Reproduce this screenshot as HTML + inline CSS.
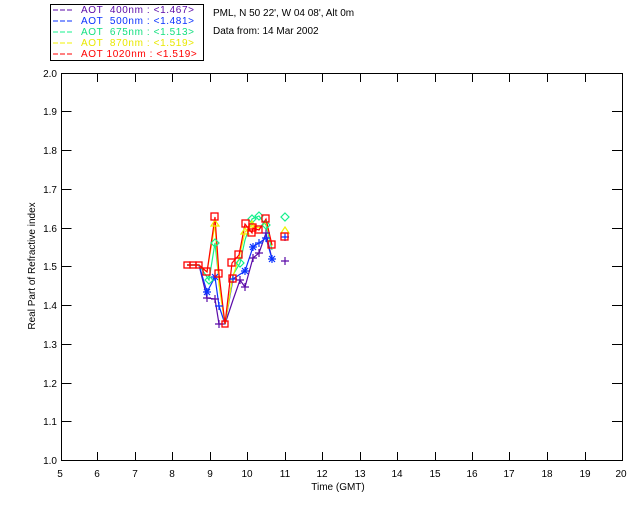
<!DOCTYPE html>
<html><head><meta charset="utf-8"><style>
html,body{margin:0;padding:0;background:#fff;}
svg{display:block;font-family:"Liberation Sans",sans-serif;}
</style></head><body>
<svg width="640" height="512" viewBox="0 0 640 512" xmlns="http://www.w3.org/2000/svg">
<rect width="640" height="512" fill="#fff"/>
<!-- legend -->
<rect x="50.5" y="4.5" width="153" height="56" fill="none" stroke="#000" stroke-width="1"/>
<g font-size="10" letter-spacing="0.6">
<line x1="53" y1="10" x2="73" y2="10" stroke="#5a0aa8" stroke-dasharray="5,2"/>
<text x="81" y="13" fill="#5a0aa8" xml:space="preserve">AOT  400nm : &lt;1.467&gt;</text>
<line x1="53" y1="21" x2="73" y2="21" stroke="#0a32ff" stroke-dasharray="5,2"/>
<text x="81" y="24" fill="#0a32ff" xml:space="preserve">AOT  500nm : &lt;1.481&gt;</text>
<line x1="53" y1="32" x2="73" y2="32" stroke="#14f08c" stroke-dasharray="5,2"/>
<text x="81" y="35" fill="#14e080" xml:space="preserve">AOT  675nm : &lt;1.513&gt;</text>
<line x1="53" y1="43" x2="73" y2="43" stroke="#f0f000" stroke-dasharray="5,2"/>
<text x="81" y="46" fill="#e8e800" xml:space="preserve">AOT  870nm : &lt;1.519&gt;</text>
<line x1="53" y1="54" x2="73" y2="54" stroke="#f00" stroke-dasharray="5,2"/>
<text x="81" y="57" fill="#f00" xml:space="preserve">AOT 1020nm : &lt;1.519&gt;</text>
</g>
<g font-size="10">
<text x="213" y="16" fill="#000">PML, N 50 22', W 04 08', Alt 0m</text>
<text x="213" y="34" fill="#000">Data from: 14 Mar 2002</text>
</g>
<!-- axes -->
<g stroke="#000" stroke-width="1" fill="none">
<rect x="61.5" y="73.5" width="561" height="387"/>
<path d="M61.5 111.5h10M61.5 150.5h10M61.5 189.5h10M61.5 228.5h10M61.5 266.5h10M61.5 305.5h10M61.5 344.5h10M61.5 383.5h10M61.5 421.5h10"/>
<path d="M97.5 460v-8M135.5 460v-8M172.5 460v-8M210.5 460v-8M247.5 460v-8M285.5 460v-8M322.5 460v-8M360.5 460v-8M397.5 460v-8M435.5 460v-8M472.5 460v-8M509.5 460v-8M547.5 460v-8M585.5 460v-8"/>
<path d="M97.5 74v8M135.5 74v8M172.5 74v8M210.5 74v8M247.5 74v8M285.5 74v8M322.5 74v8M360.5 74v8M397.5 74v8M435.5 74v8M472.5 74v8M509.5 74v8M547.5 74v8M585.5 74v8"/>
<path d="M622 111.5h-10M622 150.5h-10M622 189.5h-10M622 228.5h-10M622 266.5h-10M622 305.5h-10M622 344.5h-10M622 383.5h-10M622 421.5h-10"/>
</g>
<g font-size="10" fill="#000" text-anchor="end">
<text x="57" y="77">2.0</text><text x="57" y="115">1.9</text><text x="57" y="154">1.8</text><text x="57" y="193">1.7</text><text x="57" y="232">1.6</text><text x="57" y="270">1.5</text><text x="57" y="309">1.4</text><text x="57" y="348">1.3</text><text x="57" y="387">1.2</text><text x="57" y="425">1.1</text><text x="57" y="464">1.0</text>
</g>
<g font-size="10" fill="#000" text-anchor="middle">
<text x="60" y="477">5</text><text x="97" y="477">6</text><text x="135" y="477">7</text><text x="172" y="477">8</text><text x="210" y="477">9</text><text x="247" y="477">10</text><text x="285" y="477">11</text><text x="322" y="477">12</text><text x="360" y="477">13</text><text x="397" y="477">14</text><text x="435" y="477">15</text><text x="472" y="477">16</text><text x="509" y="477">17</text><text x="547" y="477">18</text><text x="585" y="477">19</text><text x="621" y="477">20</text>
<text x="338" y="490">Time (GMT)</text>
<text transform="translate(35,266) rotate(-90)">Real Part of Refractive index</text>
</g>
<!-- data lines -->
<g fill="none" stroke-width="1.2">
<polyline stroke="#5a0aa8" points="187,265 193,265 199,265 207,298 215,299 219,324 225,324 233,300 240,280 245,287 253,258 259,253 266,233 272,259"/>
<polyline stroke="#0a32ff" points="187,265 193,265 199,265 207,292 215,277 219,306 225,324 233,279 245,271 253,247 259,243 266,238 272,259"/>
<polyline stroke="#14f08c" points="187,265 193,265 199,265 209,280 215,243 220,290 225,324 233,275 240,263 245,240 252,219 259,216 266,225 272,250"/>
<polyline stroke="#f0f000" points="187,265 193,265 199,265 207,272 215,224 219,285 225,324 233,276 239,258 245,232 252,225 259,228 266,222 272,246"/>
<polyline stroke="#f00" points="187,265 193,265 199,265 207,272 215,217 219,274 225,324 232,263 239,255 245,224 252,233 253,228 259,230 266,219 272,245"/>
</g>
<!-- markers -->
<g fill="none" stroke="#5a0aa8" stroke-width="1.2">
<path d="M203 298h8M207 294v8M211 299h8M215 295v8M215 324h8M219 320v8M236 280h8M240 276v8M241 287h8M245 283v8M249 258h8M253 254v8M255 253h8M259 249v8M262 233h8M266 229v8M281 261h8M285 257v8"/>
</g>
<g stroke="#0a32ff" stroke-width="1.2">
<path d="M203 292h8M207 288v8M204 289l6 6M210 289l-6 6M211 277h8M215 273v8M212 274l6 6M218 274l-6 6M215 306h8M219 302v8M241 271h8M245 267v8M242 268l6 6M248 268l-6 6M249 247h8M253 243v8M250 244l6 6M256 244l-6 6M255 243h8M259 239v8M262 238h8M266 234v8M268 259h8M272 255v8M269 256l6 6M275 256l-6 6M281 237h8M285 233v8M229 279h8M233 275v8"/>
</g>
<g fill="none" stroke="#14f08c" stroke-width="1.2">
<path d="M252 215l4 4l-4 4l-4-4zM259 212l4 4l-4 4l-4-4zM285 213l4 4l-4 4l-4-4zM215 239l4 4l-4 4l-4-4zM209 276l4 4l-4 4l-4-4zM240 259l4 4l-4 4l-4-4zM266 221l4 4l-4 4l-4-4z"/>
</g>
<g fill="none" stroke="#f0f000" stroke-width="1.2">
<path d="M215 220l4 6h-8zM245 228l4 6h-8zM285 227l4 6h-8zM252 221l4 6h-8z"/>
</g>
<g fill="none" stroke="#f00" stroke-width="1.3">
<rect x="184" y="262" width="6" height="6"/><rect x="190" y="262" width="6" height="6"/><rect x="196" y="262" width="6" height="6"/>
<rect x="203" y="268" width="7" height="7"/><rect x="211" y="213" width="7" height="7"/><rect x="215" y="270" width="7" height="7"/>
<rect x="222" y="321" width="6" height="6"/><rect x="229" y="275" width="7" height="7"/><rect x="228" y="259" width="7" height="7"/>
<rect x="235" y="251" width="7" height="7"/><rect x="242" y="220" width="7" height="7"/><rect x="249" y="224" width="7" height="7"/>
<rect x="248" y="229" width="7" height="7"/><rect x="255" y="226" width="7" height="7"/><rect x="262" y="215" width="7" height="7"/>
<rect x="268" y="241" width="7" height="7"/><rect x="281" y="233" width="7" height="7"/>
</g>
</svg>
</body></html>
